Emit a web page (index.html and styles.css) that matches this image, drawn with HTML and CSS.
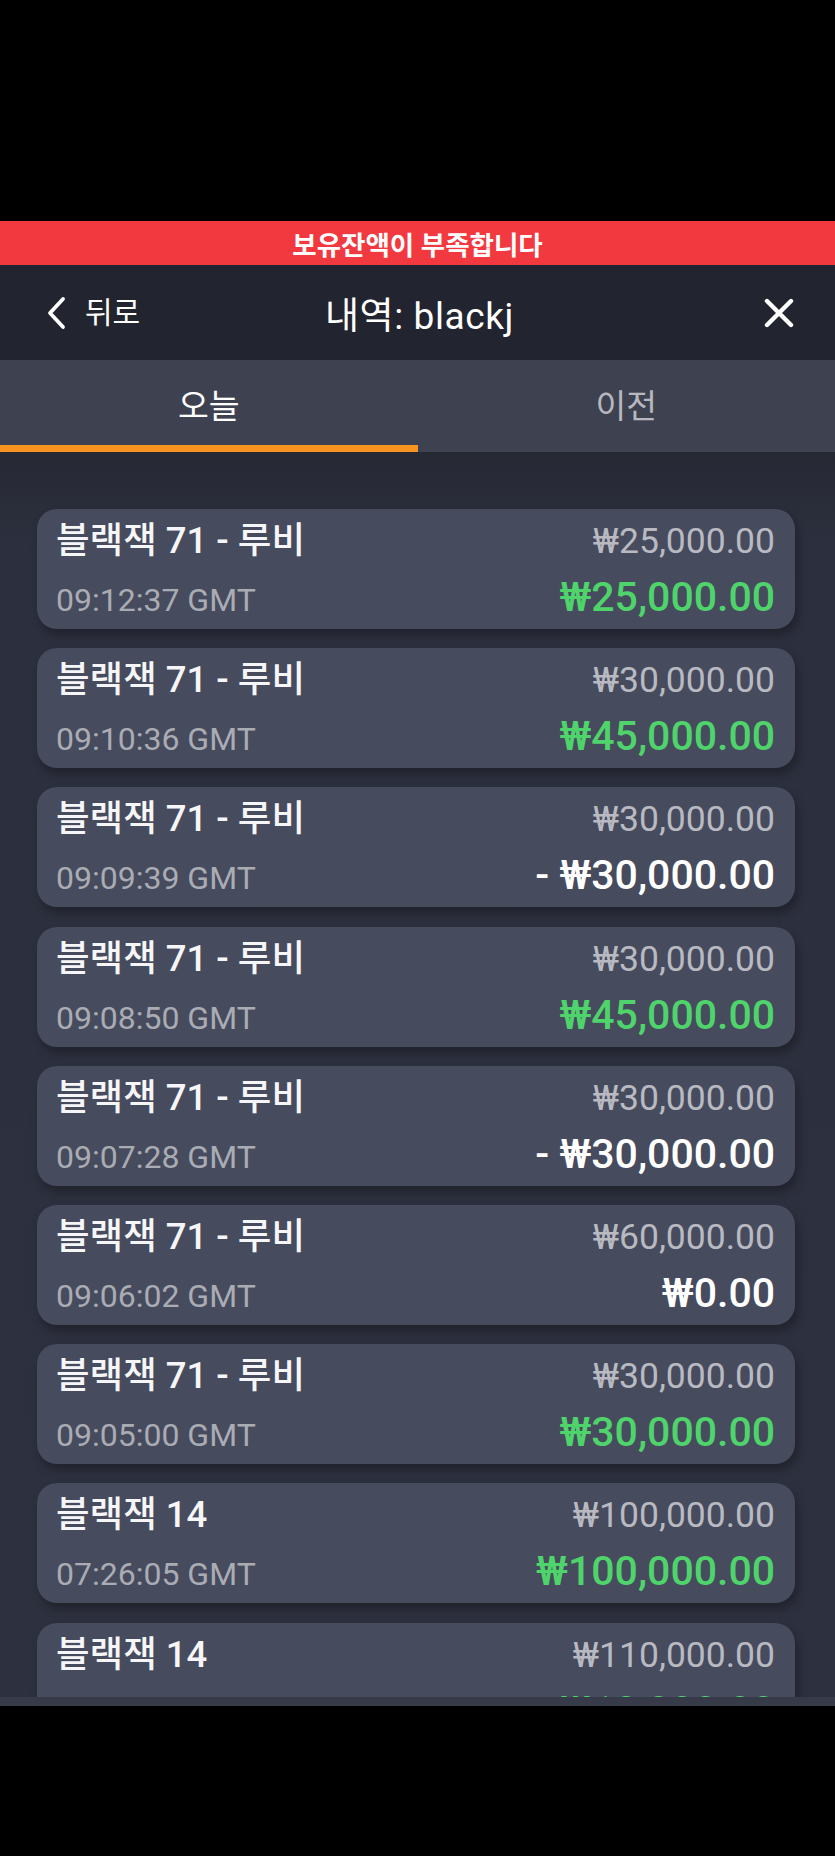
FILE: index.html
```html
<!DOCTYPE html>
<html lang="ko">
<head>
<meta charset="utf-8">
<title>내역: blackj</title>
<link rel="stylesheet" href="styles.css">
</head>
<body>
<div class="screen">
  <div class="top-black"></div>
  <div class="alert">보유잔액이 부족합니다</div>
  <header class="header">
    <div class="back">
      <svg class="chev" width="22" height="34" viewBox="0 0 22 34"><path d="M18 3 L5 17 L18 31" fill="none" stroke="#fff" stroke-width="3.8" stroke-linecap="round" stroke-linejoin="round"/></svg>
      <span>뒤로</span>
    </div>
    <div class="title">내역: blackj</div>
    <svg class="close" width="30" height="30" viewBox="0 0 30 30"><path d="M3 3 L27 27 M27 3 L3 27" fill="none" stroke="#fff" stroke-width="4.4" stroke-linecap="round"/></svg>
  </header>
  <nav class="tabs">
    <div class="tab active">오늘</div>
    <div class="tab">이전</div>
  </nav>
  <main class="list">
    <div class="card"><div class="row"><span class="game">블랙잭 71 - 루비</span><span class="bet">₩25,000.00</span></div><div class="row"><span class="time">09:12:37 GMT</span><span class="win green">₩25,000.00</span></div></div>
    <div class="card"><div class="row"><span class="game">블랙잭 71 - 루비</span><span class="bet">₩30,000.00</span></div><div class="row"><span class="time">09:10:36 GMT</span><span class="win green">₩45,000.00</span></div></div>
    <div class="card"><div class="row"><span class="game">블랙잭 71 - 루비</span><span class="bet">₩30,000.00</span></div><div class="row"><span class="time">09:09:39 GMT</span><span class="win">- ₩30,000.00</span></div></div>
    <div class="card"><div class="row"><span class="game">블랙잭 71 - 루비</span><span class="bet">₩30,000.00</span></div><div class="row"><span class="time">09:08:50 GMT</span><span class="win green">₩45,000.00</span></div></div>
    <div class="card"><div class="row"><span class="game">블랙잭 71 - 루비</span><span class="bet">₩30,000.00</span></div><div class="row"><span class="time">09:07:28 GMT</span><span class="win">- ₩30,000.00</span></div></div>
    <div class="card"><div class="row"><span class="game">블랙잭 71 - 루비</span><span class="bet">₩60,000.00</span></div><div class="row"><span class="time">09:06:02 GMT</span><span class="win">₩0.00</span></div></div>
    <div class="card"><div class="row"><span class="game">블랙잭 71 - 루비</span><span class="bet">₩30,000.00</span></div><div class="row"><span class="time">09:05:00 GMT</span><span class="win green">₩30,000.00</span></div></div>
    <div class="card"><div class="row"><span class="game">블랙잭 14</span><span class="bet">₩100,000.00</span></div><div class="row"><span class="time">07:26:05 GMT</span><span class="win green">₩100,000.00</span></div></div>
    <div class="card"><div class="row"><span class="game">블랙잭 14</span><span class="bet">₩110,000.00</span></div><div class="row"><span class="time">07:20:11 GMT</span><span class="win green">₩10,000.00</span></div></div>
  </main>
  <div class="strip"></div>
</div>
</body>
</html>
```
FILE: styles.css
```css
* { box-sizing: border-box; }
html, body { margin: 0; padding: 0; background: #000; }
body {
  font-family: "Roboto", "Noto Sans CJK KR", sans-serif;
  color: #fff;
  width: 835px;
  height: 1856px;
  overflow: hidden;
}
.screen { display: flex; flex-direction: column; height: 1856px; }
.top-black { height: 221px; background: #000; flex: none; }
.alert {
  height: 44px; flex: none;
  background: #f2393f;
  display: flex; align-items: center; justify-content: center;
  font-size: 26.5px; font-weight: 700;
}
.header {
  height: 95px; flex: none;
  background: #22252f;
  display: grid;
  grid-template-columns: 1fr auto 1fr;
  align-items: center;
  padding: 0 41px 0 45px;
}
.back { display: flex; align-items: center; gap: 18px; font-size: 30px; }
.back span { line-height: 1; }
.chev { display: block; }
.title { font-size: 37px; font-weight: 400; letter-spacing: 0.6px; }
.close { justify-self: end; display: block; }
.tabs {
  height: 92px; flex: none;
  background: #3e4150;
  display: grid; grid-template-columns: 1fr 1fr;
}
.tab {
  display: flex; align-items: center; justify-content: center;
  font-size: 33.5px; color: #b7b8bf;
  padding-top: 2px;
  border-bottom: 7px solid transparent;
}
.tab.active { color: #fff; border-bottom-color: #f7931e; }
.list {
  height: 1245px; flex: none;
  overflow: hidden;
  background: linear-gradient(#262934, #2c2f3d 90px, #2d303e);
  padding: 57px 40px 0 37px;
  display: flex; flex-direction: column; gap: 19.2px;
}
.card {
  flex: none;
  height: 120px;
  background: #464b5e;
  border-radius: 20px;
  box-shadow: 3px 6px 10px rgba(0,0,0,0.28);
  padding: 8px 20px 0 19px;
  display: flex; flex-direction: column;
}
.row { display: flex; justify-content: space-between; align-items: baseline; }
.row:first-child { height: 48px; line-height: 48px; }
.row:last-child { height: 56px; line-height: 56px; margin-top: 4px; }
.game { font-size: 36.5px; font-weight: 500; color: #f6f6f8; }
.bet { font-size: 35.5px; color: #b9bac1; }
.time { font-size: 32px; color: #aaacb4; }
.win { font-size: 41px; font-weight: 500; color: #fff; }
.win.green { color: #4fd46b; }
.strip { height: 9px; flex: none; background: #373a48; }
```
